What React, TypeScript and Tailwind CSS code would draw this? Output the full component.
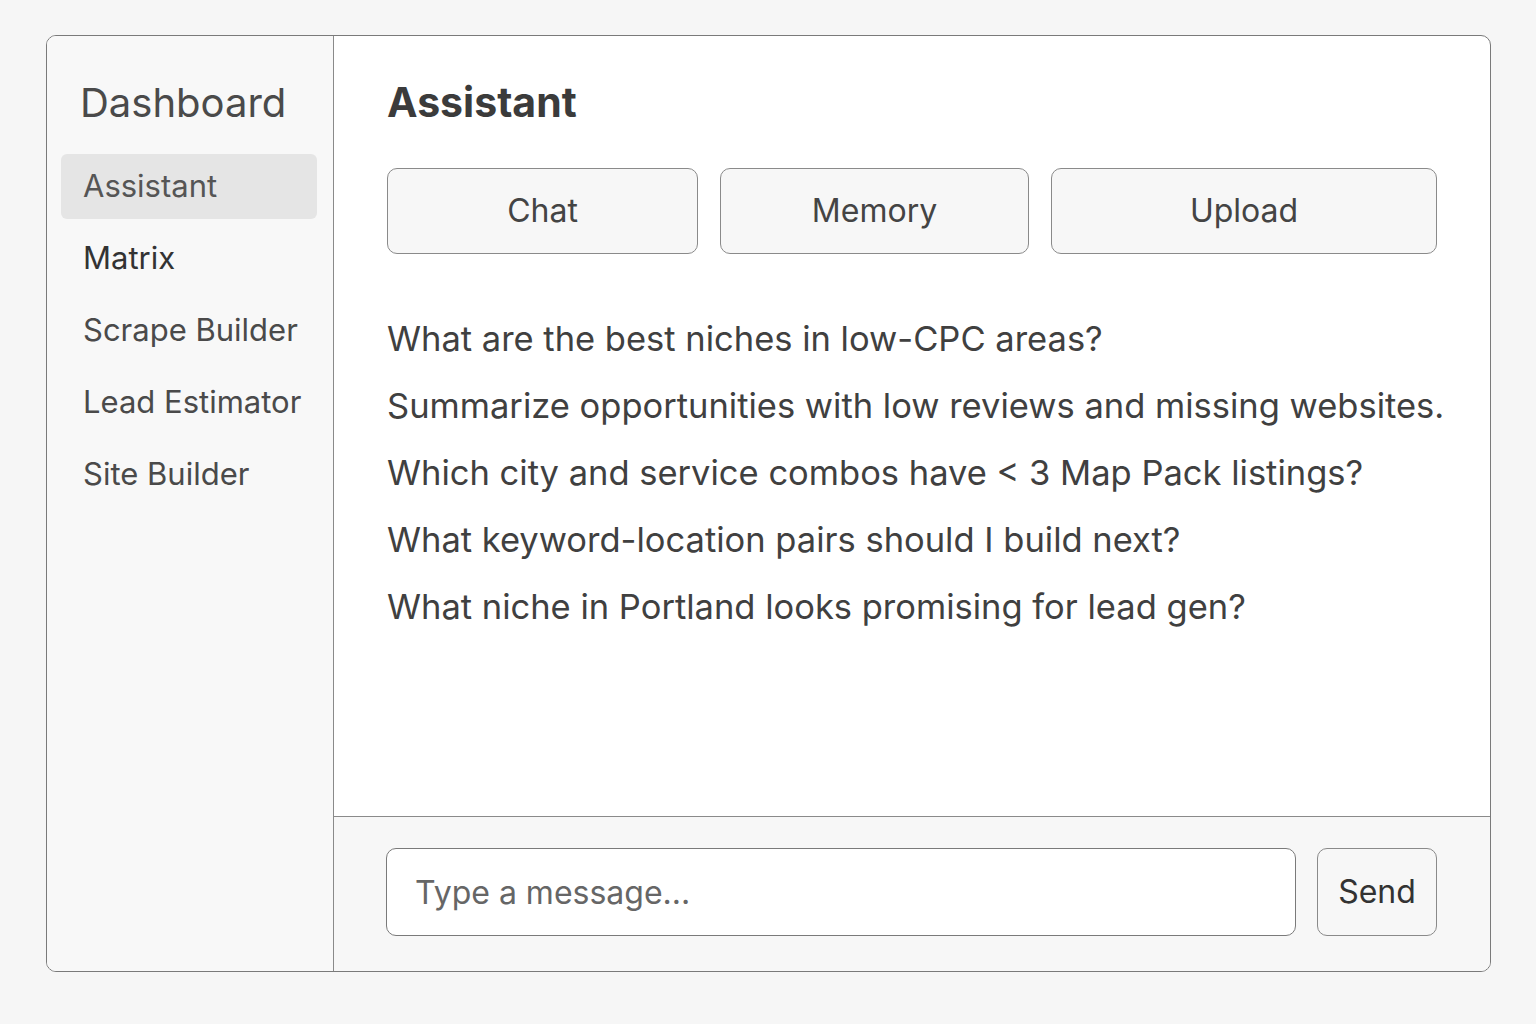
import React, { useState } from 'react';

const navItems = ['Assistant', 'Matrix', 'Scrape Builder', 'Lead Estimator', 'Site Builder'];

const prompts = [
    'What are the best niches in low-CPC areas?',
    'Summarize opportunities with low reviews and missing websites.',
    'Which city and service combos have < 3 Map Pack listings?',
    'What keyword-location pairs should I build next?',
    'What niche in Portland looks promising for lead gen?',
];

const tabs = [
    { label: 'Chat', w: 'w-[311px]' },
    { label: 'Memory', w: 'w-[309px]' },
    { label: 'Upload', w: 'w-[386px]' },
];

export default function App() {
    const [active, setActive] = useState('Assistant');
    const [message, setMessage] = useState('');

    return (
        <div className="min-h-screen bg-[#f6f6f6] pt-[35px] pl-[46px] font-['Inter',sans-serif]">
            <div className="flex h-[937px] w-[1445px] overflow-hidden rounded-[10px] border border-[#7a7a7a] bg-white">
                {/* Sidebar */}
                <aside className="flex w-[287px] shrink-0 flex-col border-r border-[#8a8a8a] bg-[#f8f8f8] pl-[14px] pr-[16px] pt-[47px]">
                    <h1 className="pl-[19px] text-[40px] leading-none text-[#4a4a4a]">Dashboard</h1>
                    <nav className="mt-[31px] flex flex-col gap-[7px]">
                        {navItems.map((item) => (
                            <button
                                key={item}
                                onClick={() => setActive(item)}
                                className={
                                    'flex h-[65px] items-center whitespace-nowrap rounded-[6px] px-[22px] text-left text-[31px] ' +
                                    (active === item ? 'bg-[#e5e5e5] text-[#555]' : item === 'Matrix' ? 'text-[#333]' : 'text-[#4a4a4a]')
                                }
                            >
                                {item}
                            </button>
                        ))}
                    </nav>
                </aside>

                {/* Main */}
                <main className="flex flex-1 flex-col">
                    <div className="flex-1 px-[53px] pt-[46px]">
                        <h2 className="text-[41px] font-bold leading-none text-[#3b3b3b]">Assistant</h2>
                        <div className="mt-[45px] flex gap-[22px]">
                            {tabs.map((t) => (
                                <button
                                    key={t.label}
                                    className={t.w + ' h-[86px] rounded-[10px] border border-[#8a8a8a] bg-[#f7f7f7] text-[32px] text-[#444]'}
                                >
                                    {t.label}
                                </button>
                            ))}
                        </div>
                        <ul className="mt-[62px] flex flex-col gap-[22px] whitespace-nowrap">
                            {prompts.map((p) => (
                                <li key={p} className="text-[34.5px] leading-[45px] text-[#404040]">
                                    {p}
                                </li>
                            ))}
                        </ul>
                    </div>

                    <div className="flex h-[155px] gap-[21px] border-t border-[#8a8a8a] bg-[#f7f7f7] pl-[52px] pr-[54px] pt-[31px]">
                        <input
                            value={message}
                            onChange={(e) => setMessage(e.target.value)}
                            placeholder="Type a message..."
                            className="h-[88px] w-[910px] rounded-[10px] border border-[#7a7a7a] bg-white px-[28px] text-[32px] text-[#333] outline-none placeholder:text-[#666]"
                        />
                        <button className="h-[88px] w-[120px] rounded-[10px] border border-[#8a8a8a] bg-[#f7f7f7] text-[32px] text-[#333]">
                            Send
                        </button>
                    </div>
                </main>
            </div>
        </div>
    );
}
